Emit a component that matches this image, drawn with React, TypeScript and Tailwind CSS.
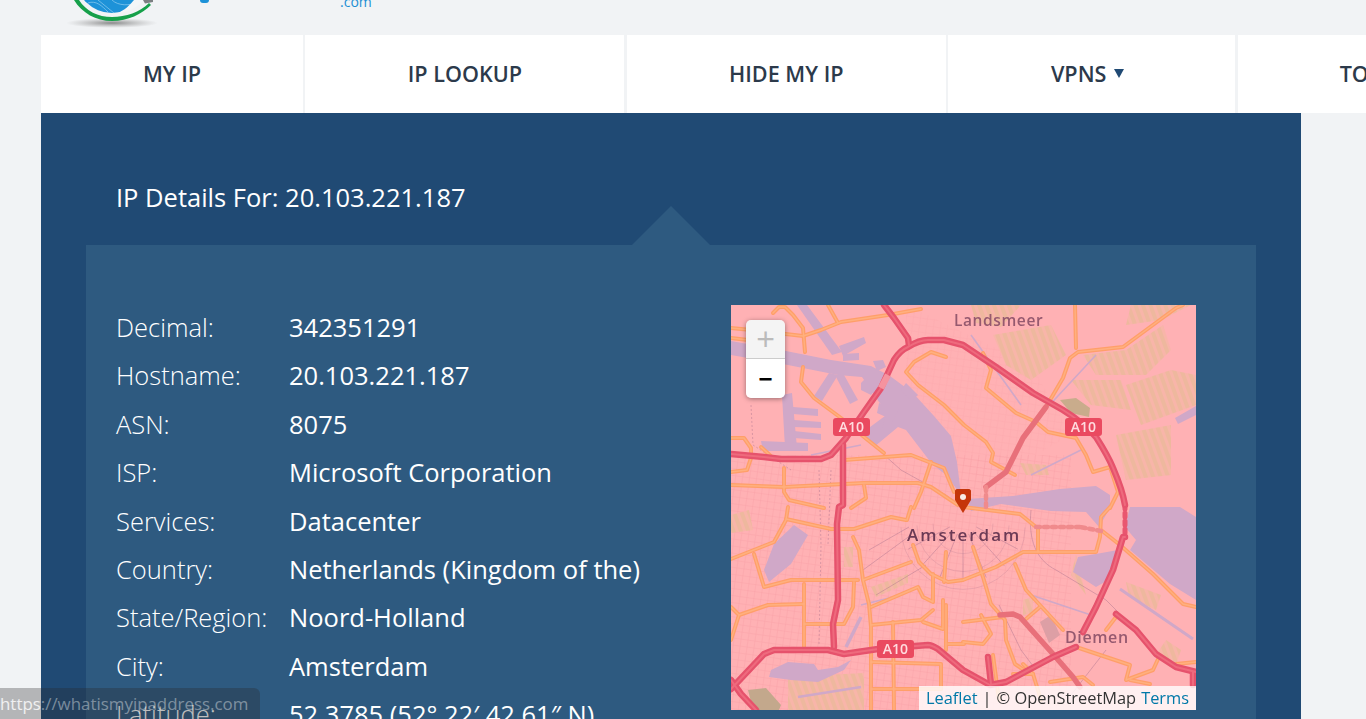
const rows: [string, string][] = [
  ["Decimal:", "342351291"],
  ["Hostname:", "20.103.221.187"],
  ["ASN:", "8075"],
  ["ISP:", "Microsoft Corporation"],
  ["Services:", "Datacenter"],
  ["Country:", "Netherlands (Kingdom of the)"],
  ["State/Region:", "Noord-Holland"],
  ["City:", "Amsterdam"],
  ["Latitude:", "52.3785 (52° 22′ 42.61″ N)"],
];

const nav = [
  { t: "MY IP", w: "w-[262px]" },
  { t: "IP LOOKUP", w: "w-[319px]" },
  { t: "HIDE MY IP", w: "w-[319px]" },
  { t: "VPNS", w: "w-[287px]", caret: true },
  { t: "TOOLS", w: "w-[274px]" },
];

const highways = [
  "M0 149 L33 152 L50 154 L90 154 L100 150 L115 133 L133 107 L150 83 L163 55 C168 47 172 44 177 42 C185 37 192 35 197 35 L213 35 L232 40 L265 62 L302 88 L332 105 C345 113 356 122 365 132 C372 143 378 153 382 163 C388 177 392 188 394 200",
  "M394 232 L392 232 L382 265 L365 302 L352 327",
  "M345 342 L322 352 L275 377 L259 380 L232 365 L207 344 C202 341 200 340 197 340 L147 344 L113 349 L97 345 L43 345 L33 349 L0 384",
  "M112 140 L112 200 L108 202 L106 219 L107 295 L102 319 L103 342",
  "M0 375 L10 389 L25 405",
  "M153 0 L163 13 L177 33 L178 40",
  "M385 309 L405 325 L425 349 L445 362 L465 367",
  "M462 367 L462 380",
  "M257 352 L260 379",
];
const reds = [
  "M255 182 L275 167 L292 133 L315 102",
  "M269 310 L282 309 L289 312 L322 349 L342 372 L349 382",
];
const orange = [
  "M0 23 L20 25 L72 31 L90 25 L110 17 L157 10 L190 4",
  "M0 33 L17 35",
  "M42 8 L48 2 L54 2 L62 10 L72 23 L74 47",
  "M97 0 L107 18",
  "M72 62 L70 77 L83 93 L110 113 L133 132 L153 148",
  "M215 52 L200 47 L183 57 L175 67 L187 80 L213 100 L233 120 L255 137 L262 148 L260 157 L284 170",
  "M252 48 L260 65 L255 83 L285 108 L305 117 L317 127 L345 133 L355 150 L362 167 L379 162 L387 187 L379 203",
  "M315 102 L332 73 L339 53 L347 47 L392 42 L445 3 L452 0",
  "M344 0 L345 43",
  "M0 180 L53 182 L133 178 L187 178 L200 182 L227 200",
  "M113 155 L180 150 L213 163 L223 187",
  "M0 133 L13 133 L20 143 L20 153 L16 165 L0 167",
  "M30 142 L42 153",
  "M53 163 L53 187 L58 195 L93 203",
  "M133 180 L135 193 L120 203",
  "M200 157 L190 187 L183 203",
  "M57 202 L55 215 L43 237 L0 254",
  "M55 214 L100 224 L123 224 L160 212 L175 215",
  "M180 202 L176 215",
  "M23 249 L33 282 L60 275 L127 275",
  "M122 232 L128 245 L132 275 L138 299 L140 322 L140 405",
  "M132 275 L180 257",
  "M73 279 L73 342",
  "M0 302 L8 310 L0 335",
  "M8 310 L37 300 L73 299",
  "M73 319 L113 319 L122 302 L123 277",
  "M140 302 L187 282 L192 292 L202 297 L202 269",
  "M140 320 L190 315 L202 305",
  "M192 317 L212 324 L212 295",
  "M162 317 L163 405",
  "M140 357 L210 359 L210 384",
  "M140 384 L210 384",
  "M182 240 L188 257 L200 269 L217 277 L232 275 L265 262 L292 247 L365 247 L369 232 L370 212 L379 202",
  "M215 247 L213 277",
  "M215 300 L215 345",
  "M217 339 L233 339",
  "M307 222 L307 247",
  "M232 202 L289 209 L305 222",
  "M242 242 L252 272 L260 299 L274 315 L275 335 L284 359 L299 369",
  "M284 259 L295 285 L332 325",
  "M295 314 L309 302",
  "M232 317 L272 312",
  "M232 337 L252 339 L260 329 L250 310",
  "M370 225 L389 240 L422 269 L452 299 L465 302",
  "M345 342 L399 360 L395 375 L422 365 L428 352",
  "M399 375 L419 379",
  "M282 369 L302 369 L292 359",
  "M319 377 L352 372 L362 380",
  "M445 359 L465 357",
  "M375 325 L385 312",
  "M262 350 L268 395",
  "M302 369 L310 395",
];
const water: string[] = [
  "M0 36 L55 46 L100 55 L140 61 L159 71 L182 88 L203 111 L220 131 L226 157 L230 190 L215 170 L201 159 L188 142 L175 125 L167 122 L143 142 L131 128 L158 108 L148 97 L131 72 L107 70 L57 60 L0 50 Z",
  "M51 90 L61 88 L66 143 L54 143 Z",
  "M30 136 L77 138 L77 146 L32 146 Z",
  "M62 102 L87 104 L87 111 L62 109 Z",
  "M63 115 L90 117 L90 123 L63 122 Z",
  "M63 126 L90 129 L90 135 L63 133 Z",
  "M66 0 L76 0 L111 47 L101 50 Z",
  "M98 68 L107 70 L91 96 L83 91 Z",
  "M104 70 L113 70 L127 95 L119 99 Z",
  "M108 41 L133 32 L135 38 L112 51 Z",
  "M112 49 L128 48 L128 55 L112 56 Z",
  "M142 56 L152 55 L155 62 L146 66 Z",
  "M130 78 L140 68 L150 78 L140 90 L130 85 Z",
  "M148 98 L168 103 L160 120 L150 125 L155 112 L146 108 Z",
  "M175 78 L187 90 L180 96 L170 85 Z",
  "M236 194 L282 191 L329 184 L365 181 L379 190 L379 203 L368 222 L355 207 L320 206 L270 199 L240 206 Z",
  "M399 202 L449 202 L465 212 L465 295 L439 279 L419 262 L399 245 L405 235 L394 222 Z",
  "M347 252 L365 249 L387 245 L379 274 L365 282 L342 267 Z",
  "M33 265 L43 239 L63 220 L77 230 L60 259 L38 277 Z",
  "M40 365 L57 357 L83 359 L87 365 L107 362 L120 355 L113 365 L87 377 L60 375 L38 372 Z",
  "M444 113 L465 101 L465 110 L447 119 Z",
];
const tan = [
  "M262 30 L320 20 L335 50 L300 75 L275 60 Z",
  "M352 50 L395 45 L432 20 L440 45 L415 70 L365 70 Z",
  "M340 75 L390 75 L400 105 L360 100 Z",
  "M395 80 L440 65 L465 70 L465 100 L410 120 Z",
  "M385 130 L440 120 L440 170 L395 175 Z",
  "M400 0 L460 0 L430 15 L395 20 Z",
  "M240 0 L290 0 L270 22 L245 18 Z",
  "M289 158 L315 160 L318 170 L295 170 Z",
  "M57 372 L133 368 L133 405 L57 405 Z",
  "M395 277 L430 290 L425 305 L398 292 Z",
  "M292 295 L302 292 L302 308 L292 310 Z",
  "M140 282 L177 269 L177 278 L145 292 Z",
  "M113 242 L122 242 L122 262 L113 262 Z",
  "M435 335 L450 345 L445 360 L425 350 Z",
  "M345 250 L355 290 L340 270 Z",
  "M0 210 L18 205 L22 225 L0 228 Z",
];
const ringArcs = [30, 46, 62];
const rays = [-62, -42, -22, 0, 22, 42, 62];
const A10 = [
  { x: 102, y: 113 },
  { x: 334, y: 113 },
  { x: 146, y: 335 },
];

function MapArt() {
  return (
    <svg viewBox="0 0 465 405" width={465} height={405} className="block">
      <defs>
        <pattern id="blocks" width="7" height="7" patternUnits="userSpaceOnUse" patternTransform="rotate(8)">
          <path d="M0 0H7M0 0V7" stroke="#f4939c" strokeWidth="0.7" fill="none" />
        </pattern>
        <pattern id="stripes" width="7" height="7" patternUnits="userSpaceOnUse" patternTransform="rotate(-20)">
          <rect width="7" height="7" fill="#f8b5a9" />
          <rect width="4" height="7" fill="#eeb89e" />
        </pattern>
      </defs>
      <rect width="465" height="405" fill="#ffb1b4" />
      <g style={{ filter: "blur(0.7px)" }}>
        <rect x="0" y="150" width="340" height="255" fill="url(#blocks)" opacity="0.65" />
        <path d="M175 0 L300 60 L340 130 L250 180 L175 90 Z" fill="url(#blocks)" opacity="0.3" />
        {tan.map((d, i) => (
          <path key={i} d={d} fill="url(#stripes)" />
        ))}
        <path d="M329 95 L345 93 L359 103 L358 112 L340 108 Z" fill="#c9ac8c" />
        <path d="M17 385 L35 383 L50 400 L48 405 L22 405 Z" fill="#c3a88c" />
        <path d="M309 317 L320 310 L329 330 L318 338 Z" fill="#dd9fa5" />
        {water.map((d, i) => (
          <path key={i} d={d} fill="#d0a8c8" />
        ))}
        <g fill="none" stroke="#d0a8c8" strokeWidth="1.6">
          <path d="M389 284 L462 334" strokeWidth="3" />
          <path d="M67 392 L130 382" strokeWidth="2.5" />
          <path d="M115 342 L130 312" strokeWidth="3.5" />
          <path d="M240 30 L290 100 M365 50 L300 120 M300 170 L350 145" />
          <path d="M80 150 L130 140 M130 300 L170 290 M300 290 L360 310" />
        </g>
        <g fill="none" stroke="#a6708c" strokeWidth="0.7" opacity="0.6">
          <path d="M20 100 L22 140 L60 165 M88 165 L90 240 L88 340 M100 165 L97 240" strokeDasharray="2 2" />
          <path d="M133 132 L170 165 L215 190 L232 203" />
          <path d="M300 205 C297 235 305 255 325 265 L375 295 L390 310" />
          <path d="M268 300 L290 345 L305 365 M340 390 L375 345" />
          <path d="M132 265 L180 230 M145 290 L195 260 M138 245 L178 222" />
          {rays.map((r) => (
            <line
              key={r}
              x1={232 + 15 * Math.sin((r * Math.PI) / 180)}
              y1={215 + 15 * Math.cos((r * Math.PI) / 180)}
              x2={232 + 62 * Math.sin((r * Math.PI) / 180)}
              y2={215 + 62 * Math.cos((r * Math.PI) / 180)}
            />
          ))}
        </g>
        <g fill="none" stroke="#a6708c" strokeWidth="0.6" opacity="0.35">
          {ringArcs.map((r) => (
            <path key={r} d={`M${232 - r} ${215 + r * 0.12} A${r} ${r} 0 0 0 ${232 + r} ${215 + r * 0.12}`} />
          ))}
        </g>
        <g fill="none" stroke="#ff9f69" strokeWidth="4" strokeLinecap="round" strokeLinejoin="round">
          {orange.map((d, i) => (
            <path key={i} d={d} />
          ))}
        </g>
        <g fill="none" stroke="#ffb07f" strokeWidth="1.4" strokeLinecap="round" strokeLinejoin="round">
          {orange.map((d, i) => (
            <path key={i} d={d} />
          ))}
        </g>
        <g fill="none" stroke="#e8707a" strokeWidth="5.5" strokeLinecap="round" strokeLinejoin="round">
          {reds.map((d, i) => (
            <path key={i} d={d} />
          ))}
        </g>
        <g fill="none" stroke="#f08a8c" strokeWidth="3" strokeLinecap="round">
          <path d="M255 182 L255 205 M349 222 L305 222 M370 226 L349 222" strokeDasharray="4 4" strokeWidth="4.5" />
          <path d="M394 200 L394 232" strokeDasharray="4 4" stroke="#e9566f" strokeWidth="5" />
        </g>
        <g fill="none" stroke="#e6526c" strokeWidth="6.5" strokeLinejoin="round" strokeLinecap="round">
          {highways.map((d, i) => (
            <path key={i} d={d} />
          ))}
        </g>
        <g fill="none" stroke="#ee6a7d" strokeWidth="2" strokeLinejoin="round" strokeLinecap="round">
          {highways.map((d, i) => (
            <path key={i} d={d} />
          ))}
        </g>
        <path d="M157 70 L150 83" fill="none" stroke="#f5939f" strokeWidth="6.5" />
      </g>
      {A10.map((s, i) => (
        <g key={i}>
          <rect x={s.x} y={s.y} width={37} height={18} rx={3} fill="#ea4a60" />
          <text x={s.x + 18.5} y={s.y + 14} textAnchor="middle" fontSize="14" fontWeight="600" fill="#ffdcdf" fontFamily="'Open Sans', sans-serif">
            A10
          </text>
        </g>
      ))}
      <text x="223" y="21" fill="#96596f" fontSize="15.5" fontWeight="600" letterSpacing="0.6" fontFamily="'Open Sans', sans-serif">Landsmeer</text>
      <text x="176" y="236" fill="#6b3a55" fontSize="17" fontWeight="600" letterSpacing="2" fontFamily="'Open Sans', sans-serif">Amsterdam</text>
      <text x="334" y="338" fill="#96596f" fontSize="16" fontWeight="600" letterSpacing="0.6" fontFamily="'Open Sans', sans-serif">Diemen</text>
      <path d="M224 186 C224 185 225 184 226 184 L238 184 C239 184 240 185 240 186 L240 195 L232 208 L224 195 Z" fill="#c5350a" />
      <circle cx="232" cy="192" r="3" fill="#f8ece6" />
    </svg>
  );
}

function Logo() {
  return (
    <svg width={120} height={30} viewBox="0 0 120 30" className="block ml-[50px] shrink-0">
      <defs>
        <radialGradient id="shadow">
          <stop offset="0%" stopColor="#6f6f6f" stopOpacity="0.8" />
          <stop offset="100%" stopColor="#999" stopOpacity="0" />
        </radialGradient>
      </defs>
      <ellipse cx="62" cy="23" rx="46" ry="5" fill="url(#shadow)" />
      <circle cx="62" cy="-23.5" r="36.5" fill="#1d92d8" />
      <path d="M38 3 C46 0 52 6 58 12 M62 0 C68 6 80 6 88 2 M48 0 L64 13" fill="none" stroke="#8fcdf0" strokeWidth="0.7" />
      <path d="M66 14 C78 12 88 7 94 0 L84 0 C80 5 75 10 66 14 Z" fill="#f3f6f8" />
      <path d="M24 0 C32 13 46 21 62 21 C78 21 92 14 101 5 L99 3 C90 12 76 17 62 17 C48 17 36 11 29 0 Z" fill="#16a04a" />
      <path d="M93 0 L103 0 L103 2 L95 3.5 Z" fill="#7c7f82" />
    </svg>
  );
}

export default function App() {
  return (
    <div
      className="h-[719px] w-[1366px] overflow-hidden bg-[#f1f3f5] relative"
      style={{ fontFamily: "'Open Sans', sans-serif" }}
    >
      <header className="h-[35px] flex items-start overflow-hidden">
        <Logo />
        <div className="w-[9px] h-[3px] ml-[30px] rounded-b-[4px] bg-[#1d92d8] shrink-0" />
        <span className="ml-[131px] -mt-[7px] text-[14px] leading-[18px] text-[#1d8fd3]">.com</span>
      </header>

      <nav className="ml-[41px] flex h-[78px] w-[1400px] gap-[2.4px]">
        {nav.map((n) => (
          <div
            key={n.t}
            className={`${n.w} shrink-0 bg-white flex items-center justify-center gap-[8px] text-[21.6px] font-semibold text-[#2c3a4b] whitespace-nowrap`}
          >
            <span>{n.t}</span>
            {n.caret && (
              <svg width="10" height="9" viewBox="0 0 10 9" className="mb-[2px] mr-[8px]">
                <path d="M0 0H10L5 9Z" fill="#204a74" />
              </svg>
            )}
          </div>
        ))}
      </nav>

      <main className="ml-[41px] w-[1260px] bg-[#204a74] px-[45px] pt-[66px] pb-[40px]">
        <h1 className="pl-[30px] text-[25.5px] leading-[36px] font-normal text-white">
          IP Details For: 20.103.221.187
        </h1>
        <section className="relative mt-[30px] bg-[#2e5a80] pl-[30px] pr-[60px] pt-[58px] flex justify-between items-start">
          <div className="absolute left-[546px] -top-[39px] w-[78px] h-[39px] bg-[#2e5a80] [clip-path:polygon(50%_0,100%_100%,0_100%)]" />
          <dl className="w-[560px]">
            {rows.map(([k, v]) => (
              <div key={k} className="flex h-[48.4px] items-center text-[25.5px] text-white whitespace-nowrap">
                <dt className="w-[173px] font-light shrink-0">{k}</dt>
                <dd className="font-normal">{v}</dd>
              </div>
            ))}
          </dl>
          <div className="relative mt-[2px] w-[465px] h-[405px] overflow-hidden shrink-0">
            <MapArt />
            <div className="absolute left-[15px] top-[15px] w-[39px] rounded-[5px] overflow-hidden shadow-[0_1px_5px_rgba(0,0,0,0.4)]">
              <div className="h-[39px] bg-[#f4f4f4] border-b border-[#ccc] flex items-center justify-center text-[32px] font-normal text-[#bbb] leading-none" style={{ fontFamily: "'Liberation Sans', sans-serif" }}>+</div>
              <div className="h-[39px] bg-white flex items-center justify-center text-[24px] font-bold text-black leading-none" style={{ fontFamily: "'Liberation Sans', sans-serif" }}>−</div>
            </div>
            <div className="absolute right-0 bottom-0 h-[24px] w-[277px] bg-white/80 flex items-center justify-center text-[16.4px] text-[#333] whitespace-nowrap">
              <span className="text-[#0078a8]">Leaflet</span>
              <span className="mx-[5px]">|</span>
              <span>© OpenStreetMap</span>
              <span className="ml-[5px] text-[#0078a8]">Terms</span>
            </div>
          </div>
        </section>
      </main>

      <div className="absolute left-0 bottom-0 h-[31px] w-[260px] rounded-tr-[6px] bg-[rgba(40,40,40,0.3)] flex items-center text-[16.9px] text-white/40 whitespace-nowrap">
        <span className="text-white/80">https</span>://whatismyipaddress.com
      </div>
    </div>
  );
}
